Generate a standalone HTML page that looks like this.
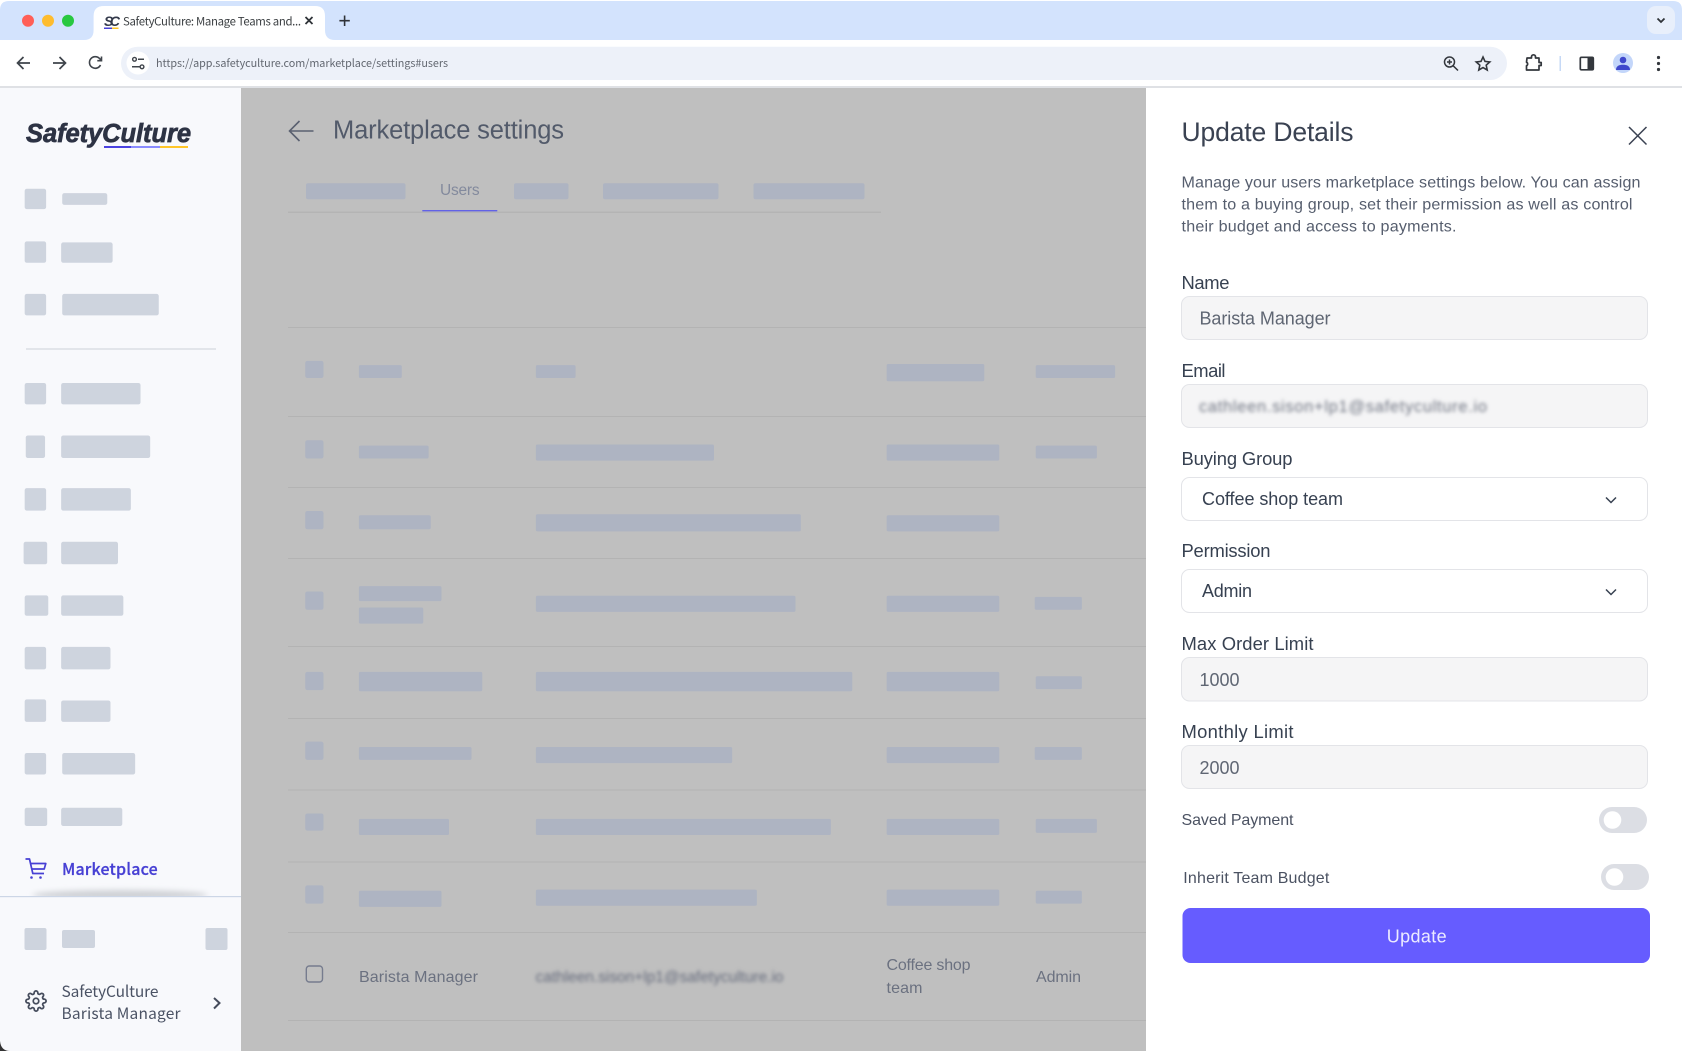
<!DOCTYPE html>
<html lang="en">
<head>
<meta charset="utf-8">
<title>Marketplace settings</title>
<style>
html,body{margin:0;padding:0;width:1682px;height:1051px;overflow:hidden;background:#fff}
svg{display:block}
text{font-family:"Liberation Sans",sans-serif;white-space:pre}
.n{font-family:"Noto Sans CJK SC","Liberation Sans",sans-serif}
.lab{font-size:18.4px;fill:#374151}
.val{font-size:18px;fill:#5f6673}
.sel{font-size:18px;fill:#374151}
.desc{font-size:16.1px;fill:#565e6e}
.tog{font-size:16px;fill:#4b5262}
.rowt{font-size:16px;fill:#6b7180}
</style>
</head>
<body>
<svg width="1682" height="1051" viewBox="0 0 1682 1051" xmlns="http://www.w3.org/2000/svg">
<defs>
<filter id="b2" x="-5%" y="-50%" width="110%" height="200%"><feGaussianBlur stdDeviation="1.8"/></filter>
<filter id="b3" x="-10%" y="-100%" width="120%" height="300%"><feGaussianBlur stdDeviation="3"/></filter>
<clipPath id="side"><rect x="0" y="870" width="241" height="26"/></clipPath>
</defs>

<!-- tab strip -->
<path d="M0 40V10Q0 1 9 1H1673Q1682 1 1682 10V40Z" fill="#d3e3fd"/>
<circle cx="28" cy="20.7" r="6" fill="#ff5f57"/>
<circle cx="48" cy="20.7" r="6" fill="#febc2e"/>
<circle cx="68" cy="20.7" r="6" fill="#28c840"/>
<path d="M84 40Q93.6 40 93.6 30V16Q93.6 6 104 6H315Q325 6 325 16V30Q325 40 335 40Z" fill="#fff"/>
<text x="104" y="26" font-size="14" font-weight="700" font-style="italic" fill="#33394a" textLength="16">SC</text>
<rect x="104" y="27.5" width="8" height="1.5" fill="#4740d4"/><rect x="112" y="27.5" width="6.5" height="1.5" fill="#ffc629"/>
<text class="n" x="123" y="25.5" font-size="11.4" fill="#3c4043" textLength="178">SafetyCulture: Manage Teams and...</text>
<path d="M305.5 17L312.5 24M312.5 17L305.5 24" stroke="#2f3338" stroke-width="1.8" fill="none"/>
<path d="M344.6 15.5V26M339.4 20.7H349.8" stroke="#2f3338" stroke-width="1.6" fill="none"/>
<rect x="1647" y="6" width="28" height="28" rx="9" fill="#e8effb"/>
<path d="M1657.5 18.5L1661 22L1664.5 18.5" stroke="#2f3338" stroke-width="1.8" fill="none"/>

<!-- toolbar -->
<path d="M0 86V50Q0 40 10 40H1672Q1682 40 1682 50V86Z" fill="#fff"/>
<rect x="0" y="86" width="1682" height="2" fill="#dfe1e5"/>
<path d="M30 63H18M23.5 57L17.5 63L23.5 69" stroke="#3f444b" stroke-width="1.7" fill="none"/>
<path d="M53 63H65M59.5 57L65.5 63L59.5 69" stroke="#3f444b" stroke-width="1.7" fill="none"/>
<path d="M100.5 65A5.8 5.8 0 1 1 99.5 58.5L101.5 60.5M101.5 56.5V60.7H97.3" stroke="#3f444b" stroke-width="1.6" fill="none"/>
<rect x="121" y="46.7" width="1386" height="33.3" rx="16.6" fill="#edf1f9"/>
<circle cx="138" cy="63" r="11.5" fill="#fff"/>
<circle cx="134.5" cy="59.3" r="1.9" stroke="#3f444b" stroke-width="1.4" fill="none"/>
<path d="M138 59.3H144M132 66.8H139.5" stroke="#3f444b" stroke-width="1.5" fill="none"/>
<circle cx="142" cy="66.8" r="1.9" stroke="#3f444b" stroke-width="1.4" fill="none"/>
<text class="n" x="156" y="67" font-size="10.8" fill="#626770" textLength="292">https://app.safetyculture.com/marketplace/settings#users</text>
<circle cx="1449.5" cy="62" r="5" stroke="#33373d" stroke-width="1.5" fill="none"/>
<path d="M1453.2 65.8L1458 70.5M1447 62H1452M1449.5 59.5V64.5" stroke="#33373d" stroke-width="1.5" fill="none"/>
<path d="M1483 57L1485 61.4L1489.8 62L1486.2 65.2L1487.2 70L1483 67.6L1478.8 70L1479.8 65.2L1476.2 62L1481 61.4Z" stroke="#33373d" stroke-width="1.6" fill="none"/>
<path d="M1527 58H1531.5V56.8A2 2 0 0 1 1535.5 56.8V58H1539V62.5H1541.2V65.5H1539V70H1526.5V65.8A2 2 0 0 0 1526.5 62.2Z" stroke="#33373d" stroke-width="1.7" fill="none" stroke-linejoin="round"/>
<rect x="1559.5" y="56" width="1.5" height="15" fill="#c6d9f6"/>
<rect x="1580.3" y="57.3" width="13" height="12.5" rx="1.2" stroke="#33373d" stroke-width="1.7" fill="none"/>
<rect x="1587.5" y="57.3" width="6" height="12.5" fill="#33373d"/>
<circle cx="1623" cy="63" r="10" fill="#c3d6fa"/>
<circle cx="1623" cy="60" r="3.3" fill="#3f48cc"/>
<path d="M1616 70C1616 65.8 1619.5 64.8 1623 64.8S1630 65.8 1630 70Z" fill="#3f48cc"/>
<circle cx="1658.5" cy="57.5" r="1.6" fill="#33373d"/><circle cx="1658.5" cy="63.5" r="1.6" fill="#33373d"/><circle cx="1658.5" cy="69.5" r="1.6" fill="#33373d"/>

<!-- sidebar -->
<rect x="0" y="88" width="241" height="963" fill="#f8f9fc"/>
<text x="26" y="142" font-size="25.5" font-weight="700" font-style="italic" fill="#2d3344" stroke="#2d3344" stroke-width=".7" textLength="165">SafetyCulture</text>
<rect x="104" y="146" width="27" height="2" fill="#4a42e0"/><rect x="131" y="146" width="29" height="2" fill="#8a8cff"/><rect x="160" y="146" width="28" height="2" fill="#ffc629"/>
<g transform="scale(1.0727)" fill="#ced4de">
<rect x="23" y="176" width="20" height="19" rx="2"/><rect x="58" y="180" width="42" height="11" rx="2"/>
<rect x="23" y="225" width="20" height="20" rx="2"/><rect x="57" y="226" width="48" height="19" rx="2"/>
<rect x="23" y="274" width="20" height="20" rx="2"/><rect x="58" y="274" width="90" height="20" rx="2"/>
<rect x="23" y="357" width="20" height="20" rx="2"/><rect x="57" y="357" width="74" height="20" rx="2"/>
<rect x="24" y="406" width="18" height="21" rx="2"/><rect x="57" y="406" width="83" height="21" rx="2"/>
<rect x="23" y="455" width="20" height="21" rx="2"/><rect x="57" y="455" width="65" height="21" rx="2"/>
<rect x="22" y="505" width="22" height="21" rx="2"/><rect x="57" y="505" width="53" height="21" rx="2"/>
<rect x="23" y="555" width="22" height="19" rx="2"/><rect x="57" y="555" width="58" height="19" rx="2"/>
<rect x="23" y="603" width="20" height="21" rx="2"/><rect x="57" y="603" width="46" height="21" rx="2"/>
<rect x="23" y="652" width="20" height="21" rx="2"/><rect x="57" y="653" width="46" height="20" rx="2"/>
<rect x="23" y="702" width="20" height="20" rx="2"/><rect x="58" y="702" width="68" height="20" rx="2"/>
<rect x="23" y="753" width="21" height="17" rx="2"/><rect x="57" y="753" width="57" height="17" rx="2"/>
</g>
<rect x="26" y="348.5" width="190" height="1" fill="#cdd1d8"/>
<path d="M25.5 859H29.5L32.8 873.5H44M30.5 863.5H45.8L44.2 869H31.8" stroke="#4740d4" stroke-width="1.7" fill="none" stroke-linejoin="round"/>
<circle cx="31.5" cy="877.5" r="1.3" fill="#4740d4"/><circle cx="40.5" cy="877.5" r="1.3" fill="#4740d4"/>
<text class="n" x="62" y="875" font-size="16" font-weight="500" fill="#4740d4" stroke="#4740d4" stroke-width=".25" textLength="95.7">Marketplace</text>
<g clip-path="url(#side)"><ellipse cx="120" cy="895" rx="88" ry="5" fill="#cfd1d6" filter="url(#b3)"/></g>
<rect x="0" y="896" width="241" height="1.2" fill="#ccd6e6"/>
<rect x="24.5" y="928" width="22" height="22" rx="2" fill="#ced4de"/>
<rect x="62" y="930" width="33" height="18" rx="2" fill="#ced4de"/>
<rect x="205.5" y="928" width="22" height="22" rx="2" fill="#ced4de"/>
<g transform="translate(25,990) scale(.917)" stroke="#454c5c" stroke-width="1.9" fill="none">
<circle cx="12" cy="12" r="3"/>
<path d="M19.4 15a1.65 1.65 0 0 0 .33 1.82l.06.06a2 2 0 0 1 0 2.83 2 2 0 0 1-2.83 0l-.06-.06a1.65 1.65 0 0 0-1.82-.33 1.65 1.65 0 0 0-1 1.51V21a2 2 0 0 1-2 2 2 2 0 0 1-2-2v-.09A1.65 1.65 0 0 0 9 19.4a1.65 1.65 0 0 0-1.82.33l-.06.06a2 2 0 0 1-2.83 0 2 2 0 0 1 0-2.83l.06-.06a1.65 1.65 0 0 0 .33-1.82 1.65 1.65 0 0 0-1.51-1H3a2 2 0 0 1-2-2 2 2 0 0 1 2-2h.09A1.65 1.65 0 0 0 4.6 9a1.65 1.65 0 0 0-.33-1.82l-.06-.06a2 2 0 0 1 0-2.83 2 2 0 0 1 2.83 0l.06.06a1.65 1.65 0 0 0 1.82.33H9a1.65 1.65 0 0 0 1-1.51V3a2 2 0 0 1 2-2 2 2 0 0 1 2 2v.09a1.65 1.65 0 0 0 1 1.51 1.65 1.65 0 0 0 1.82-.33l.06-.06a2 2 0 0 1 2.83 0 2 2 0 0 1 0 2.83l-.06.06a1.65 1.65 0 0 0-.33 1.82V9a1.65 1.65 0 0 0 1.51 1H21a2 2 0 0 1 2 2 2 2 0 0 1-2 2h-.09a1.65 1.65 0 0 0-1.51 1z"/>
</g>
<text class="n" x="61.5" y="997" font-size="15.5" fill="#4a5264" textLength="97">SafetyCulture</text>
<text class="n" x="61.5" y="1019" font-size="15.5" fill="#4a5264" textLength="119">Barista Manager</text>
<path d="M214 998L219.5 1003L214 1008.5" stroke="#454c5c" stroke-width="2" fill="none"/>
<path d="M0 1041Q1 1051 10 1051H0Z" fill="#333"/>

<!-- overlay main -->
<rect x="241" y="88" width="905" height="963" fill="#bfbfbf"/>
<path d="M313.5 131H290M299.5 121L289.5 131L299.5 141" stroke="#5a6070" stroke-width="1.6" fill="none"/>
<text x="333" y="138.5" font-size="25.5" fill="#525a6a" textLength="231">Marketplace settings</text>
<text x="440" y="195" font-size="15.5" fill="#838a9d" textLength="39.6">Users</text>
<rect x="288" y="211.7" width="593" height="1" fill="#b0b0b0"/>
<rect x="422.3" y="210" width="75" height="1.4" fill="#6262e6"/>
<g fill="#aeb4c2">
<rect x="306" y="183.3" width="99.5" height="16" rx="2"/>
<rect x="514" y="183.3" width="54.5" height="16" rx="2"/>
<rect x="603" y="183.3" width="115.5" height="16" rx="2"/>
<rect x="753.5" y="183.3" width="111" height="16" rx="2"/>
</g>
<g fill="#b3b3b3">
<rect x="288" y="327" width="858" height="1"/><rect x="288" y="416" width="858" height="1"/>
<rect x="288" y="487" width="858" height="1"/><rect x="288" y="558" width="858" height="1"/>
<rect x="288" y="646" width="858" height="1"/><rect x="288" y="718" width="858" height="1"/>
<rect x="288" y="789.5" width="858" height="1"/><rect x="288" y="861.5" width="858" height="1"/>
<rect x="288" y="932" width="858" height="1"/><rect x="288" y="1020" width="858" height="1"/>
</g>
<g transform="translate(.6,.4) scale(1.0727)" fill="#aeb4c2">
<rect x="284" y="336" width="17" height="16" rx="2"/><rect x="334" y="340" width="40" height="12" rx="1.5"/><rect x="499" y="340" width="37" height="12" rx="1.5"/><rect x="826" y="339" width="91" height="16" rx="1.5"/><rect x="965" y="340" width="74" height="12" rx="1.5"/>
<rect x="284" y="410" width="17" height="17" rx="2"/><rect x="334" y="415" width="65" height="12" rx="1.5"/><rect x="499" y="414" width="166" height="15" rx="1.5"/><rect x="826" y="414" width="105" height="15" rx="1.5"/><rect x="965" y="415" width="57" height="12" rx="1.5"/>
<rect x="284" y="476" width="17" height="17" rx="2"/><rect x="334" y="480" width="67" height="13" rx="1.5"/><rect x="499" y="479" width="247" height="16" rx="1.5"/><rect x="826" y="480" width="105" height="15" rx="1.5"/>
<rect x="284" y="551" width="17" height="17" rx="2"/><rect x="334" y="546" width="77" height="14" rx="1.5"/><rect x="334" y="566" width="60" height="15" rx="1.5"/><rect x="499" y="555" width="242" height="15" rx="1.5"/><rect x="826" y="555" width="105" height="15" rx="1.5"/><rect x="964" y="556" width="44" height="12" rx="1.5"/>
<rect x="284" y="626" width="17" height="17" rx="2"/><rect x="334" y="626" width="115" height="18" rx="1.5"/><rect x="499" y="626" width="295" height="18" rx="1.5"/><rect x="826" y="626" width="105" height="18" rx="1.5"/><rect x="965" y="630" width="43" height="12" rx="1.5"/>
<rect x="284" y="691" width="17" height="17" rx="2"/><rect x="334" y="696" width="105" height="12" rx="1.5"/><rect x="499" y="696" width="183" height="15" rx="1.5"/><rect x="826" y="696" width="105" height="15" rx="1.5"/><rect x="964" y="696" width="44" height="12" rx="1.5"/>
<rect x="284" y="758" width="17" height="16" rx="2"/><rect x="334" y="763" width="84" height="15" rx="1.5"/><rect x="499" y="763" width="275" height="15" rx="1.5"/><rect x="826" y="763" width="105" height="15" rx="1.5"/><rect x="965" y="763" width="57" height="13" rx="1.5"/>
<rect x="284" y="825" width="17" height="17" rx="2"/><rect x="334" y="830" width="77" height="15" rx="1.5"/><rect x="499" y="829" width="206" height="15" rx="1.5"/><rect x="826" y="829" width="105" height="15" rx="1.5"/><rect x="965" y="830" width="43" height="12" rx="1.5"/>
</g>
<rect x="306.3" y="966" width="16.2" height="16" rx="3" stroke="#767c8e" stroke-width="1.4" fill="none"/>
<text class="rowt" x="359" y="982" textLength="119">Barista Manager</text>
<text x="535.5" y="982" font-size="15.5" fill="#656b7c" textLength="248" filter="url(#b2)">cathleen.sison+lp1@safetyculture.io</text>
<text class="rowt" x="886.5" y="970" textLength="84">Coffee shop</text>
<text class="rowt" x="886.5" y="993" textLength="36">team</text>
<text class="rowt" x="1036" y="982" textLength="45">Admin</text>

<!-- panel -->
<rect x="1146" y="88" width="536" height="963" fill="#fff"/>
<text x="1181.5" y="141" font-size="26.5" fill="#3a4252" textLength="172">Update Details</text>
<path d="M1629 127L1646.5 144.5M1646.5 127L1629 144.5" stroke="#3a4252" stroke-width="1.5" fill="none"/>
<text class="desc" x="1181.5" y="187.7" textLength="459">Manage your users marketplace settings below. You can assign</text>
<text class="desc" x="1181.5" y="209.7" textLength="451">them to a buying group, set their permission as well as control</text>
<text class="desc" x="1181.5" y="231.5" textLength="275">their budget and access to payments.</text>

<text class="lab" x="1181.5" y="289" textLength="48">Name</text>
<rect x="1181.5" y="296.5" width="466" height="43" rx="8" fill="#f5f5f6" stroke="#e3e4e8"/>
<text class="val" x="1199.5" y="324.5" textLength="131">Barista Manager</text>

<text class="lab" x="1181.5" y="377" textLength="44">Email</text>
<rect x="1181.5" y="384.5" width="466" height="43" rx="8" fill="#f5f5f6" stroke="#e3e4e8"/>
<text x="1199" y="412" font-size="16.5" fill="#6f7582" textLength="288" filter="url(#b2)">cathleen.sison+lp1@safetyculture.io</text>

<text class="lab" x="1181.5" y="465" textLength="111">Buying Group</text>
<rect x="1181.5" y="477.5" width="466" height="43" rx="8" fill="#fff" stroke="#e3e4e8"/>
<text class="sel" x="1202" y="505" textLength="141">Coffee shop team</text>
<path d="M1606 497.5L1611 502.5L1616 497.5" stroke="#374151" stroke-width="1.5" fill="none"/>

<text class="lab" x="1181.5" y="557" textLength="89">Permission</text>
<rect x="1181.5" y="569.5" width="466" height="43" rx="8" fill="#fff" stroke="#e3e4e8"/>
<text class="sel" x="1202" y="597" textLength="50">Admin</text>
<path d="M1606 589.5L1611 594.5L1616 589.5" stroke="#374151" stroke-width="1.5" fill="none"/>

<text class="lab" x="1181.5" y="650" textLength="132">Max Order Limit</text>
<rect x="1181.5" y="657.5" width="466" height="43.5" rx="8" fill="#f5f5f6" stroke="#e3e4e8"/>
<text class="val" x="1199.5" y="686" textLength="40">1000</text>

<text class="lab" x="1181.5" y="738" textLength="112">Monthly Limit</text>
<rect x="1181.5" y="745.5" width="466" height="43" rx="8" fill="#f5f5f6" stroke="#e3e4e8"/>
<text class="val" x="1199.5" y="774" textLength="40">2000</text>

<text class="tog" x="1181.5" y="825" textLength="112">Saved Payment</text>
<rect x="1599" y="807" width="48" height="26" rx="13" fill="#dcdee4"/>
<circle cx="1612.5" cy="820" r="8.8" fill="#fff"/>
<text class="tog" x="1183.3" y="883" textLength="146">Inherit Team Budget</text>
<rect x="1601" y="864" width="48" height="26" rx="13" fill="#dcdee4"/>
<circle cx="1614.5" cy="877" r="8.8" fill="#fff"/>

<rect x="1182.5" y="908" width="467.5" height="55" rx="8" fill="#665cff"/>
<text x="1386.7" y="942.5" font-size="18" fill="#ecebff" textLength="60">Update</text>
</svg>
</body>
</html>
